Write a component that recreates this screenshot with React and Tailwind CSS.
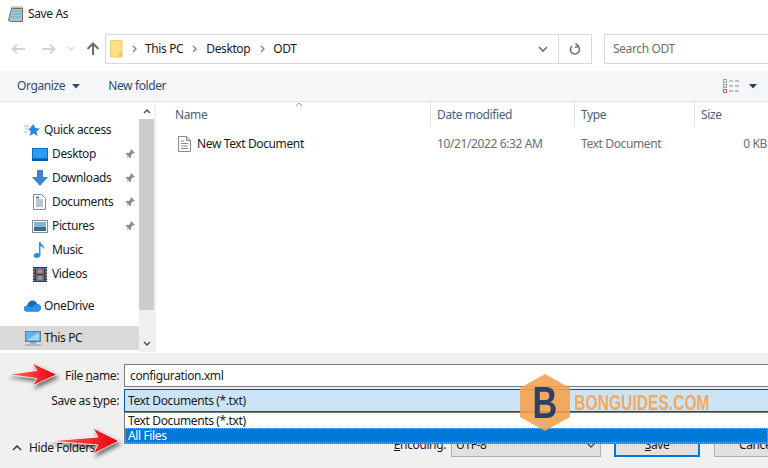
import React from "react";

const seg = "font-['Noto_Sans','Open_Sans',sans-serif] tracking-[-0.38px]";

function Pin() {
  return (
    <svg width="12" height="12" viewBox="0 0 12 12" className="ml-auto shrink-0">
      <path d="M7 1l4 4-1 .6-1-.4-2 2 .2 2-1 1-2-2-3 2.600 2.600-3-2-2 1-1 2 .2 2-2-.4-1z" fill="#8a8a8a" />
    </svg>
  );
}

function Arrow({ x, y, w, h, headX }) {
  const mid = h / 2;
  return (
    <svg width={w + 8} height={h + 8} className="absolute overflow-visible drop-shadow-[2px_3px_2px_rgba(0,0,0,0.55)]" style={{ left: x, top: y }}>
      <defs>
        <linearGradient id={`g${x}`} x1="0" y1="0" x2="1" y2="0">
          <stop offset="0" stopColor="#ff6a5a" />
          <stop offset="1" stopColor="#e8000b" />
        </linearGradient>
      </defs>
      <polygon
        points={`0,${mid} ${headX + 5},${mid - 4} ${headX},0 ${w},${mid} ${headX},${h} ${headX + 5},${mid + 4}`}
        fill={`url(#g${x})`}
        stroke="#fff"
        strokeWidth="0.8"
      />
    </svg>
  );
}

function NavRow({ icon, label, pin, indent, active }) {
  return (
    <div className={`h-6 flex items-center shrink-0 ${active ? "bg-[#d9d9d9]" : ""} ${indent ? "pl-[31px]" : "pl-[24px]"} pr-[3px]`}>
      <span className={`w-[17px] h-[17px] flex items-center justify-center shrink-0 ${indent ? "mr-[4px]" : "mr-[3px]"}`}>{icon}</span>
      <span className="text-[12px] text-[#1a1a1a] whitespace-nowrap">{label}</span>
      {pin && <Pin />}
    </div>
  );
}

const I = {
  star: (
    <svg width="17" height="15" viewBox="0 0 17 15">
      <path d="M9.500 1l1.800 4 4.700.4-3.500 3 1.100 4.600-4-2.400-4 2.400 1.100-4.600-2-1.800z" fill="#2b88d8" />
      <path d="M0 3h5M1 6h4M0 9h3" stroke="#7cc0f0" strokeWidth="1" />
    </svg>
  ),
  desktop: (
    <svg width="16" height="13" viewBox="0 0 16 13">
      <rect x="0" y="0" width="16" height="12" fill="#0b6fc9" />
      <rect x="1" y="1" width="14" height="9" fill="#2c9cf0" />
      <rect x="0" y="11" width="16" height="2" fill="#0a5ba6" />
    </svg>
  ),
  downloads: (
    <svg width="16" height="16" viewBox="0 0 16 16">
      <path d="M5 0h6v7h5l-8 9-8-9h5z" fill="#3b82d0" />
    </svg>
  ),
  documents: (
    <svg width="13" height="16" viewBox="0 0 13 16">
      <path d="M.5.500h8l4 4v11H.5z" fill="#fff" stroke="#8a8a8a" />
      <path d="M3 6h7M3 8h7M3 10h7M3 12h7" stroke="#6a8fb0" />
      <rect x="3" y="2.500" width="3" height="2" fill="#3b82d0" />
    </svg>
  ),
  pictures: (
    <svg width="16" height="13" viewBox="0 0 16 13">
      <rect x=".5" y=".5" width="15" height="12" fill="#fff" stroke="#8a8a8a" />
      <rect x="2" y="2" width="12" height="5" fill="#7fb5d8" />
      <rect x="2" y="7" width="12" height="4" fill="#3d6a88" />
    </svg>
  ),
  music: (
    <svg width="13" height="16" viewBox="0 0 13 16">
      <path d="M6 0h1.500c.3 2.500 4.500 3.500 3.500 7.500-.4-2-2-3-3.500-3.300V13c0 1.800-2 3-4 3C1.500 16 .5 15 .5 13.800.5 12.300 2.300 11 4 11c.8 0 1.500.2 2 .5z" fill="#1e96e8" />
    </svg>
  ),
  videos: (
    <svg width="14" height="15" viewBox="0 0 14 15">
      <rect width="14" height="15" fill="#3a3a3a" />
      <rect x="3" y="1" width="8" height="6" fill="#4a78b8" />
      <rect x="3" y="8" width="8" height="6" fill="#4a78b8" />
      <circle cx="7" cy="4" r="2" fill="#d89030" />
      <circle cx="7" cy="11" r="2" fill="#d89030" />
      <path d="M1 1v13M13 1v13" stroke="#ddd" strokeDasharray="1.500 1.500" strokeWidth="1" />
    </svg>
  ),
  onedrive: (
    <svg width="17" height="12" viewBox="0 0 17 12">
      <path d="M3 11.500C1 11.500 0 10 0 8.700 0 7 1.300 5.800 3 5.800 3.800 2.500 6 .5 8.500.5c2.300 0 4 1.300 4.800 3.500 2 0 3.700 1.800 3.700 3.800s-1.500 3.700-3.500 3.700z" fill="#1668b8" />
      <path d="M3 11.500C1 11.500 0 10 0 8.700 0 7 1.300 5.800 3 5.800c2 0 3.500.7 4.500 1.700 1-1.300 3-3.500 5.800-3.500 2 0 3.700 1.800 3.700 3.800s-1.500 3.700-3.500 3.700z" fill="#2a94e4" />
    </svg>
  ),
  pc: (
    <svg width="16" height="15" viewBox="0 0 16 15">
      <rect x=".5" y=".5" width="15" height="10" fill="#59b4f0" stroke="#6b7c8c" />
      <path d="M2 9L13 2h1v7z" fill="#9ad6fa" />
      <rect x="5" y="11" width="6" height="1.500" fill="#8a9aa8" />
      <rect x="0" y="13.500" width="16" height="1" fill="#8a9aa8" />
    </svg>
  ),
};

export default function App() {
  return (
    <div className={`relative w-[768px] h-[468px] overflow-hidden bg-white flex flex-col ${seg}`}>
      {/* title */}
      <div className="h-[28px] flex items-center pl-[8px] shrink-0">
        <svg width="15" height="16" viewBox="0 0 15 16" className="mr-[5px]">
          <path d="M3.500 2.500h11v13h-11l-3-1z" fill="#9ec9dc" stroke="#7a6a4a" />
          <path d="M4 5l9 0M4 8h9M3 11h10" stroke="#6ea8c0" />
          <path d="M4 2V.5M6 2V.5M8 2V.5M10 2V.5M12 2V.5M14 2V.5" stroke="#777" />
        </svg>
        <span className="text-[12px] text-[#1a1a1a]">Save As</span>
      </div>

      {/* nav */}
      <div className="h-[43px] flex items-start shrink-0 pt-[6px]">
        <div className="w-[105px] h-[30px] flex items-center pl-[11px] shrink-0">
          <svg width="15" height="12" viewBox="0 0 15 12" className="mr-[15px]"><path d="M14 6H2M6 1.500L1.500 6 6 10.500" fill="none" stroke="#d4d4d4" strokeWidth="1.800" /></svg>
          <svg width="15" height="12" viewBox="0 0 15 12" className="mr-[11px]"><path d="M1 6h12M9 1.500L13.500 6 9 10.500" fill="none" stroke="#d4d4d4" strokeWidth="1.800" /></svg>
          <svg width="8" height="6" viewBox="0 0 8 6" className="mr-[11px]"><path d="M1 1l3 3 3-3" fill="none" stroke="#d8d8d8" strokeWidth="1.300" /></svg>
          <svg width="14" height="14" viewBox="0 0 14 14"><path d="M7 13V2M1.500 7L7 1.500 12.500 7" fill="none" stroke="#6d6d6d" strokeWidth="2" /></svg>
        </div>
        <div className="w-[487px] h-[30px] border border-[#d9d9d9] flex items-center shrink-0 mr-[12px]">
          <svg width="13" height="18" viewBox="0 0 13 18" className="ml-[4px] mr-[9px]">
            <path d="M.5.500h11.500v16.500H.5z" fill="#ffe08a" stroke="#f0cc66" />
            <path d="M9 13h3v4H9z" fill="#f5c645" />
          </svg>
          <svg width="6" height="8" viewBox="0 0 6 8" className="mr-[7px]"><path d="M1 1l3 3-3 3" fill="none" stroke="#808080" strokeWidth="1.300" /></svg>
          <span className="text-[12px] text-[#1a1a1a] mr-[9px]">This PC</span>
          <svg width="6" height="8" viewBox="0 0 6 8" className="mr-[8px]"><path d="M1 1l3 3-3 3" fill="none" stroke="#808080" strokeWidth="1.300" /></svg>
          <span className="text-[12px] text-[#1a1a1a] mr-[10px]">Desktop</span>
          <svg width="6" height="8" viewBox="0 0 6 8" className="mr-[7px]"><path d="M1 1l3 3-3 3" fill="none" stroke="#808080" strokeWidth="1.300" /></svg>
          <span className="text-[12px] text-[#1a1a1a]">ODT</span>
          <svg width="10" height="7" viewBox="0 0 10 7" className="ml-auto mr-[10px]"><path d="M1 1l4 4 4-4" fill="none" stroke="#707070" strokeWidth="1.600" /></svg>
          <div className="w-[33px] h-full border-l border-[#d9d9d9] flex items-center justify-center">
            <svg width="12" height="13" viewBox="0 0 12 13"><path d="M3 3a4.500 4.500 0 1 0 6 .2M6.500 .5L9.500 3 6 4.500" fill="none" stroke="#6d6d6d" strokeWidth="1.500" /></svg>
          </div>
        </div>
        <div className="flex-1 h-[30px] border-y border-l border-[#d9d9d9] flex items-center pl-[8px]">
          <span className="text-[12px] text-[#6d6d6d]">Search ODT</span>
        </div>
      </div>

      {/* toolbar */}
      <div className="h-[30px] bg-[#f5f6f7] border-b border-[#e5e5e5] flex items-center shrink-0 pl-[17px] box-content">
        <span className="text-[12px] text-[#2f4a6d]">Organize</span>
        <svg width="8" height="5" viewBox="0 0 8 5" className="ml-[7px] mr-[28px]"><path d="M0 0h8L4 4.500z" fill="#2f4a6d" /></svg>
        <span className="text-[12px] text-[#2f4a6d]">New folder</span>
        <svg width="17" height="14" viewBox="0 0 17 14" className="ml-auto mr-[9px]">
          <rect x=".5" y=".5" width="3" height="3" fill="none" stroke="#a0a0a0" />
          <rect x=".5" y="5.500" width="3" height="3" fill="none" stroke="#a0a0a0" />
          <rect x=".5" y="10.500" width="3" height="3" fill="none" stroke="#d06060" />
          <path d="M6 2h4M12 2h4M6 7h4M12 7h4M6 12h4M12 12h4" stroke="#8a8a8a" />
        </svg>
        <svg width="8" height="5" viewBox="0 0 8 5" className="mr-[11px]"><path d="M0 0h8L4 4.500z" fill="#2a3f63" /></svg>
      </div>

      {/* body */}
      <div className="h-[250px] flex shrink-0">
        <div className="w-[139px] shrink-0 flex flex-col pt-[16px] pb-[2px]">
          <NavRow icon={I.star} label="Quick access" />
          <NavRow indent icon={I.desktop} label="Desktop" pin />
          <NavRow indent icon={I.downloads} label="Downloads" pin />
          <NavRow indent icon={I.documents} label="Documents" pin />
          <NavRow indent icon={I.pictures} label="Pictures" pin />
          <NavRow indent icon={I.music} label="Music" />
          <NavRow indent icon={I.videos} label="Videos" />
          <div className="h-2 shrink-0" />
          <NavRow icon={I.onedrive} label="OneDrive" />
          <div className="h-2 shrink-0" />
          <NavRow active icon={I.pc} label="This PC" />
        </div>
        <div className="w-[15px] shrink-0 bg-[#f0f0f0] flex flex-col">
          <div className="h-[17px] flex items-center justify-center bg-white shrink-0">
            <svg width="8" height="6" viewBox="0 0 8 6"><path d="M1 5l3-3 3 3" fill="none" stroke="#505050" strokeWidth="1.500" /></svg>
          </div>
          <div className="h-[191px] bg-[#cdcdcd] shrink-0" />
          <div className="mt-auto h-[17px] flex items-center justify-center">
            <svg width="8" height="6" viewBox="0 0 8 6"><path d="M1 1l3 3 3-3" fill="none" stroke="#505050" strokeWidth="1.500" /></svg>
          </div>
        </div>
        <div className="w-[2px] shrink-0 bg-[#f0f0f0]" />
        <div className="flex-1 flex flex-col">
          <div className="h-[25px] flex text-[12px] text-[#4c607a] shrink-0">
            <div className="w-[274px] pl-[19px] flex items-center relative">
              Name
              <svg width="8" height="5" viewBox="0 0 8 5" className="absolute left-[139px] top-0"><path d="M1 4l3-3 3 3" fill="none" stroke="#9a9a9a" /></svg>
            </div>
            <div className="w-[144px] pl-[6px] border-l border-[#e5e5e5] flex items-center">Date modified</div>
            <div className="w-[120px] pl-[6px] border-l border-[#e5e5e5] flex items-center">Type</div>
            <div className="flex-1 pl-[6px] border-l border-[#e5e5e5] flex items-center">Size</div>
          </div>
          <div className="h-[33px] flex items-center text-[12px]">
            <div className="w-[274px] pl-[22px] flex items-center text-[#1a1a1a]">
              <svg width="13" height="16" viewBox="0 0 13 16" className="mr-[6px]">
                <path d="M.5.500h8l4 4v11H.5z" fill="#fff" stroke="#8a8a8a" />
                <path d="M8.500.500v4h4M3 5h3M3 7.500h7M3 10h7M3 12.500h7" fill="none" stroke="#8a8a8a" />
              </svg>
              New Text Document
            </div>
            <div className="w-[144px] pl-[7px] text-[#6d6d6d]">10/21/2022 6:32 AM</div>
            <div className="w-[120px] pl-[7px] text-[#6d6d6d]">Text Document</div>
            <div className="flex-1 text-right pr-[1px] text-[#6d6d6d]">0 KB</div>
          </div>
        </div>
      </div>

      {/* bottom */}
      <div className="flex-1 bg-[#f0f0f0] pt-[11px] border-t border-white">
        <div className="flex items-center h-[23px]">
          <label className="w-[119px] text-right text-[12px] text-[#1a1a1a]">File <u>n</u>ame:</label>
          <div className="ml-[5px] flex-1 h-[23px] bg-white border-y border-l border-[#7a7a7a] flex items-center pl-[5px] text-[12px] text-[#1a1a1a]">configuration.xml</div>
        </div>
        <div className="flex items-center h-[23px] mt-[2px]">
          <label className="w-[119px] text-right text-[12px] text-[#1a1a1a]">Save as <u>t</u>ype:</label>
          <div className="ml-[5px] flex-1 h-[23px] bg-[#cce4f7] border-y border-l border-[#005499] flex items-center pl-[3px] text-[12px] text-[#1a1a1a]">Text Documents (*.txt)</div>
        </div>
        <div className="flex items-center h-[24px] mt-[21px]">
          <svg width="10" height="6" viewBox="0 0 10 6" className="ml-[12px] mr-[7px] mt-[5px]"><path d="M1 5l4-4 4 4" fill="none" stroke="#404040" strokeWidth="1.600" /></svg>
          <span className="text-[12px] text-[#1a1a1a] mt-[6px]">Hide Folders</span>
          <span className="ml-auto text-[12px] text-[#1a1a1a] mr-[5px]"><u>E</u>ncoding:</span>
          <div className="w-[150px] h-[24px] bg-[#e1e1e1] border border-[#adadad] flex items-center pl-[4px] text-[12px] text-[#1a1a1a] mr-[13px]">
            UTF-8
            <svg width="10" height="6" viewBox="0 0 10 6" className="ml-auto mr-[4px]"><path d="M1 1l4 4 4-4" fill="none" stroke="#505050" strokeWidth="1.400" /></svg>
          </div>
          <div className="w-[86px] h-[24px] bg-[#e1e1e1] border-2 border-[#0078d7] flex items-center justify-center text-[12px] text-[#1a1a1a] mr-[14px]"><span><u>S</u>ave</span></div>
          <div className="w-[54px] h-[24px] bg-[#e1e1e1] border-y border-l border-[#adadad] overflow-hidden pl-[24px] text-[12px] leading-[22px] text-[#1a1a1a] whitespace-nowrap">Cancel</div>
        </div>
      </div>

      {/* dropdown */}
      <div className="absolute left-[124px] top-[412px] right-0 h-[32px] border-y border-l border-[#7a7a7a] bg-white flex flex-col text-[12px]">
        <div className="h-[15px] pl-[3px] flex items-center text-[#1a1a1a]">Text Documents (*.txt)</div>
        <div className="h-[15px] pl-[2px] flex items-center bg-[#0078d7] text-white border border-dotted border-[#e8a060]">All Files</div>
      </div>

      {/* arrows */}
      <Arrow x={8} y={363} w={49} h={23} headX={24} />
      <Arrow x={49} y={428} w={70} h={26} headX={44} />

      {/* watermark */}
      <div className="absolute left-[519px] top-[374px] w-[52px] h-[57px] flex items-center justify-center">
        <svg width="52" height="57" viewBox="0 0 52 57" className="absolute inset-0">
          <polygon points="26,0 51,14 51,43 26,57 1,43 1,14" fill="#f5a14a" fillOpacity="0.88" />
        </svg>
        <span className="relative font-['Liberation_Sans',sans-serif] font-bold text-[44px] leading-none tracking-normal scale-x-[0.78] text-[#2d4067]">B</span>
      </div>
      <div className="absolute left-[574px] top-[390px] origin-left scale-x-[0.71] font-['Liberation_Sans',sans-serif] font-bold text-[22px] leading-[26px] tracking-normal text-[#f5a85a] whitespace-nowrap">BONGUIDES.COM</div>
    </div>
  );
}
